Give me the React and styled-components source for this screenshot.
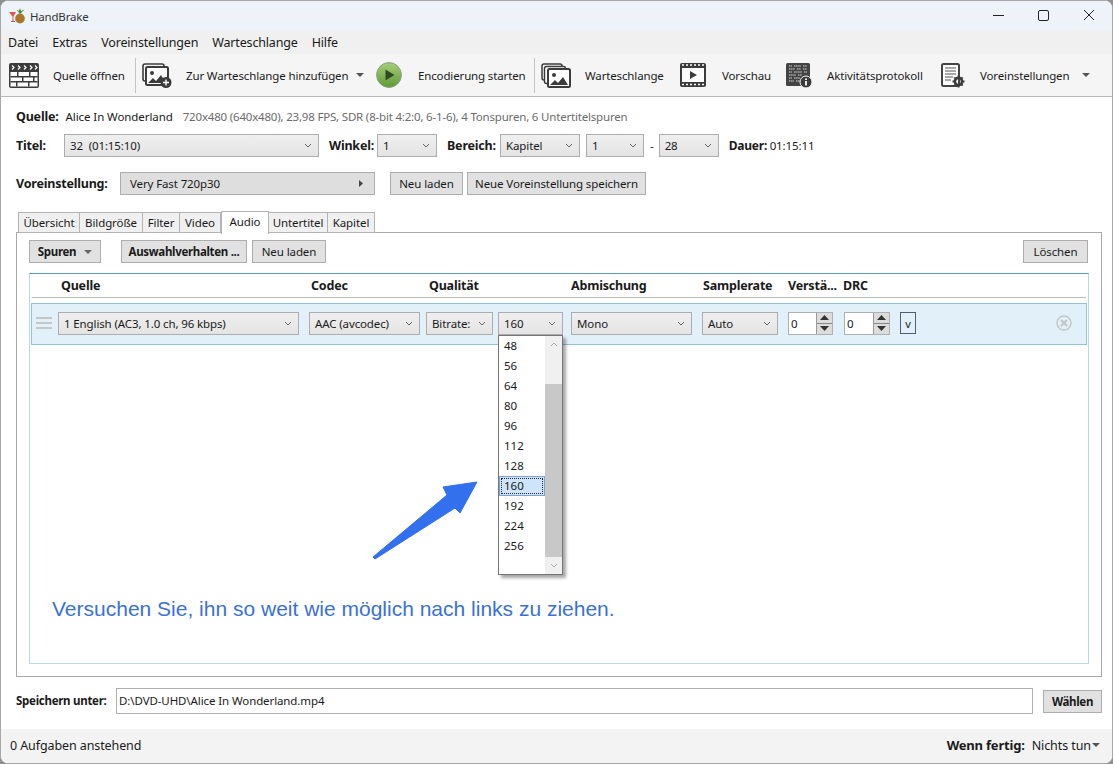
import React from "react";
import styled, { createGlobalStyle } from "styled-components";

const Global = createGlobalStyle`
  html, body {
    margin: 0;
    padding: 0;
    background: #8f8f8f;
  }
  body {
    font-family: "Noto Sans", "Open Sans", sans-serif;
    font-size: 12px;
    color: #1a1a1a;
  }
`;

const Window = styled.div`
  box-sizing: border-box;
  position: relative;
  width: 1113px;
  height: 764px;
  display: flex;
  flex-direction: column;
  overflow: hidden;
  background: #fff;
  border: 1px solid #a8a8a8;
  border-radius: 8px;
`;

const TitleBar = styled.div`
  height: 30px;
  flex: none;
  display: flex;
  align-items: center;
  padding-left: 8px;
  padding-right: 1px;
  background: #eef3fa;
`;

const TitleText = styled.span`
  margin-left: 4px;
  font-size: 11.5px;
  letter-spacing: -0.2px;
  color: #333;
`;

const WindowButtons = styled.div`
  margin-left: auto;
  display: flex;
`;

const WindowButton = styled.div`
  width: 45px;
  height: 28px;
  margin-bottom: 2px;
  display: flex;
  align-items: center;
  justify-content: center;
`;

const MenuBar = styled.div`
  height: 23px;
  flex: none;
  display: flex;
  align-items: center;
  gap: 14px;
  padding-left: 7px;
  background: #f0f0f0;
  font-size: 12.5px;
  letter-spacing: -0.16px;
`;

const Toolbar = styled.div`
  height: 42px;
  flex: none;
  display: flex;
  align-items: center;
  padding-left: 8px;
  background: #f5f5f5;
  border-bottom: 1px solid #b9b9b9;
`;

const ToolButton = styled.div`
  width: ${props => props.$w}px;
  flex: none;
  display: flex;
  align-items: center;
  gap: ${props => props.$gap || 14}px;
  font-size: 11.5px;
  letter-spacing: -0.14px;
  white-space: nowrap;
`;

const ToolSep = styled.div`
  width: 1px;
  height: 35px;
  flex: none;
  margin-right: 6px;
  background: #c4c4c4;
`;

const Caret = styled.span`
  width: 0;
  height: 0;
  flex: none;
  margin-left: ${props => props.$ml || 0}px;
  border-left: 4px solid transparent;
  border-right: 4px solid transparent;
  border-top: 4px solid ${props => props.$color || "#555"};
`;

const Body = styled.div`
  flex: 1;
  display: flex;
  flex-direction: column;
  padding: 0 10px 0 15px;
  min-height: 0;
`;

const SourceRow = styled.div`
  height: 37px;
  flex: none;
  display: flex;
  align-items: center;
  padding-top: 2px;
  box-sizing: border-box;
  white-space: nowrap;
`;

const Label = styled.span`
  font-weight: 700;
  font-size: ${props => props.$size || 12.5}px;
  letter-spacing: -0.2px;
  white-space: nowrap;
  width: ${props => (props.$w ? props.$w + "px" : "auto")};
  margin-left: ${props => props.$ml || 0}px;
  flex: none;
`;

const Value = styled.span`
  font-size: ${props => props.$size || 11.5}px;
  letter-spacing: -0.08px;
  margin-left: ${props => props.$ml || 0}px;
`;

const Muted = styled(Value)`
  color: #6c6c6c;
  letter-spacing: -0.19px;
`;

const ControlRow = styled.div`
  height: 23px;
  flex: none;
  display: flex;
  align-items: center;
  margin-top: ${props => props.$mt || 0}px;
`;

const SelectBox = styled.div`
  box-sizing: border-box;
  width: ${props => props.$w}px;
  height: 23px;
  flex: none;
  margin-left: ${props => props.$ml || 0}px;
  display: flex;
  align-items: center;
  justify-content: space-between;
  padding: 0 6px 0 5px;
  background: linear-gradient(#efefef, #e4e4e4);
  border: 1px solid #adadad;
  font-size: 11.5px;
  letter-spacing: -0.12px;
  white-space: nowrap;
`;

const Button = styled.div`
  box-sizing: border-box;
  width: ${props => props.$w}px;
  height: 23px;
  flex: none;
  margin-left: ${props => props.$ml || 0}px;
  display: flex;
  align-items: center;
  justify-content: center;
  gap: 8px;
  background: #e1e1e1;
  border: 1px solid #adadad;
  font-size: 11.5px;
  letter-spacing: ${props => (props.$bold ? -0.32 : -0.1)}px;
  font-weight: ${props => (props.$bold ? 700 : 400)};
  white-space: nowrap;
`;

const DeleteButton = styled(Button)`
  margin-left: auto;
  margin-right: 1px;
`;

const PresetButton = styled(SelectBox)`
  background: #dedede;
  padding-left: 9px;
  padding-right: 11px;
`;

const Tabs = styled.div`
  height: 26px;
  flex: none;
  display: flex;
  align-items: flex-end;
  margin-top: 12px;
  margin-bottom: -1px;
  padding-left: 2px;
  position: relative;
  z-index: 1;
`;

const Tab = styled.div`
  box-sizing: border-box;
  width: ${props => props.$w}px;
  height: ${props => (props.$active ? 23 : 21)}px;
  margin-bottom: ${props => (props.$active ? -1 : 0)}px;
  padding-bottom: ${props => (props.$active ? 4 : 1)}px;
  display: flex;
  align-items: center;
  justify-content: center;
  background: ${props => (props.$active ? "#fff" : "#f0f0f0")};
  border: 1px solid #b4b4b4;
  border-left-width: ${props => (props.$first || props.$active ? 1 : 0)}px;
  border-bottom: ${props => (props.$active ? "none" : "1px solid #b4b4b4")};
  font-size: 11.5px;
  letter-spacing: -0.1px;
`;

const Panel = styled.div`
  box-sizing: border-box;
  height: 445px;
  flex: none;
  display: flex;
  flex-direction: column;
  padding: 7px 12px 12px 12px;
  border: 1px solid #a9a9a9;
`;

const PanelActions = styled.div`
  height: 23px;
  flex: none;
  display: flex;
  align-items: center;
  margin-bottom: 10px;
`;

const Table = styled.div`
  position: relative;
  flex: 1;
  border: 1px solid #b9d9e6;
  border-top-color: #5d9cbc;
  padding: 0 1px;
`;

const TableHead = styled.div`
  height: 23px;
  display: flex;
  align-items: center;
  margin: 0 1px;
  padding-left: 29px;
  border-bottom: 1px solid #bcbcbc;
`;

const HeadCell = styled.div`
  width: ${props => props.$w}px;
  flex: none;
  font-weight: 700;
  font-size: 12.5px;
  letter-spacing: -0.2px;
  white-space: nowrap;
`;

const TrackRow = styled.div`
  box-sizing: border-box;
  height: 42px;
  margin-top: 5px;
  display: flex;
  align-items: center;
  padding: 0 0 2px 4px;
  background: #e2f1f9;
  border: 1px solid #90c2d9;
`;

const Handle = styled.div`
  width: 16px;
  height: 12px;
  flex: none;
  margin-right: 6px;
  border-top: 2px solid #c6c6c6;
  border-bottom: 2px solid #c6c6c6;
  position: relative;
  box-sizing: border-box;

  &::after {
    content: "";
    position: absolute;
    left: 0;
    right: 0;
    top: 3px;
    height: 2px;
    background: #c6c6c6;
  }
`;

const Spinner = styled.div`
  box-sizing: border-box;
  width: ${props => props.$w}px;
  height: 23px;
  flex: none;
  margin-left: ${props => props.$ml}px;
  display: flex;
  background: #fff;
  border: 1px solid #b0b0b0;
`;

const SpinnerValue = styled.div`
  flex: 1;
  padding-left: 2px;
  display: flex;
  align-items: center;
  font-size: 11.5px;
`;

const SpinnerArrows = styled.div`
  width: 15px;
  display: flex;
  flex-direction: column;
  gap: 1px;
  background: #888;
  border-left: 1px solid #9a9a9a;
`;

const SpinnerArrow = styled.div`
  flex: 1;
  display: flex;
  align-items: center;
  justify-content: center;
  background: #dcdcdc;
`;

const MiniToggle = styled.div`
  box-sizing: border-box;
  width: 16px;
  height: 22px;
  flex: none;
  margin-left: 10px;
  display: flex;
  align-items: center;
  justify-content: center;
  border: 1px solid #4f5f6e;
  font-size: 11px;
`;

const RemoveIcon = styled.div`
  margin-left: auto;
  margin-right: 14px;
  display: flex;
`;

const Dropdown = styled.div`
  position: absolute;
  left: 468px;
  top: 61px;
  box-sizing: border-box;
  width: 65px;
  height: 240px;
  display: flex;
  background: #fff;
  border: 1px solid #767676;
  box-shadow: 3px 3px 3px rgba(0, 0, 0, 0.35);
  z-index: 3;
`;

const DropdownList = styled.div`
  flex: 1;
  display: flex;
  flex-direction: column;
`;

const DropdownItem = styled.div`
  box-sizing: border-box;
  height: 20px;
  flex: none;
  display: flex;
  align-items: center;
  padding: 0 0 2px ${props => (props.$selected ? 4 : 5)}px;
  font-size: 11.5px;
  background: ${props => (props.$selected ? "#cde4fb" : "transparent")};
  border: ${props => (props.$selected ? "1px solid #7da2ce" : "none")};
  outline: ${props => (props.$selected ? "1px dotted #223" : "none")};
  outline-offset: -3px;
`;

const Scrollbar = styled.div`
  width: 17px;
  flex: none;
  display: flex;
  flex-direction: column;
  background: #f0f0f0;
`;

const ScrollEnd = styled.div`
  height: 17px;
  flex: none;
  display: flex;
  align-items: center;
  justify-content: center;
`;

const ScrollTrack = styled.div`
  flex: 1;
  display: flex;
  flex-direction: column;
  padding-top: 31px;
`;

const ScrollThumb = styled.div`
  flex: 1;
  background: #c8c8c8;
`;

const ArrowMark = styled.svg`
  position: absolute;
  left: 340px;
  top: 204px;
  z-index: 2;
`;

const Hint = styled.div`
  position: absolute;
  left: 22px;
  top: 323px;
  font-family: "Liberation Sans", Arial, sans-serif;
  font-size: 21px;
  color: #3a70dc;
  white-space: nowrap;
`;

const SaveRow = styled.div`
  box-sizing: border-box;
  height: 51px;
  flex: none;
  display: flex;
  align-items: center;
  padding-bottom: 3px;
`;

const SaveLabel = styled(Label)`
  font-size: 11.5px;
  letter-spacing: -0.28px;
  width: 100px;
  padding-bottom: 2px;
`;

const PathInput = styled.div`
  box-sizing: border-box;
  width: 917px;
  height: 26px;
  flex: none;
  display: flex;
  align-items: center;
  padding: 0 0 2px 2px;
  background: #fff;
  border: 1px solid #b0b0b0;
  font-size: 11.5px;
  letter-spacing: -0.1px;
`;

const StatusBar = styled.div`
  box-sizing: border-box;
  height: 34px;
  margin-top: auto;
  flex: none;
  display: flex;
  align-items: center;
  padding: 0 12px 2px 9px;
  background: #f3f3f3;
  font-size: 12.5px;
  letter-spacing: -0.1px;
`;

const StatusRight = styled.div`
  margin-left: auto;
  display: flex;
  align-items: center;
`;

const Chevron = () => (
  <svg width="8" height="5" viewBox="0 0 8 5" fill="none" stroke="#666" strokeWidth="1">
    <path d="M1 1l3 3 3-3" />
  </svg>
);

const Select = ({ children, ...rest }) => (
  <SelectBox {...rest}>
    <span>{children}</span>
    <Chevron />
  </SelectBox>
);

const HandBrakeLogo = () => (
  <svg width="17" height="17" viewBox="0 0 17 17">
    <path d="M0 4h7L4.5 8.5V13H6v1H2v-1h1.5V8.5z" fill="#d8584e" />
    <ellipse cx="11" cy="10.5" rx="4.8" ry="5" fill="#a8772a" />
    <path d="M11 6L7.500 1.500l2.500 1.500L11 0l1 3 3.500-1.500z" fill="#4d8b31" />
  </svg>
);

const OpenIcon = () => (
  <svg width="30" height="25" viewBox="0 0 30 25">
    <rect x="0" y="0" width="30" height="25" rx="2" fill="#3c3c3c" />
    <path d="M3 2.5l2 2-2 2M9 2.5l2 2-2 2M15 2.5l2 2-2 2M21 2.5l2 2-2 2M26 2.5l2 2-2 2" fill="none" stroke="#fff" strokeWidth="1.2" />
    <rect x="1.5" y="9" width="27" height="14.5" fill="#fff" />
    <path d="M1.5 13h27v1.5h-27zM1.5 18h27v1.5h-27zM8 9h1.5v4H8zM20 9h1.5v4H20zM13 14.5h1.5V18H13zM24 14.5h1.5V18H24zM7 19.5h1.5v4H7zM19 19.5h1.5v4H19z" fill="#3c3c3c" />
  </svg>
);

const Photo = ({ x = 5, y = 5 }) => (
  <g transform={`translate(${x} ${y})`}>
    <rect width="22" height="18" rx="1.5" fill="#fff" stroke="#3c3c3c" strokeWidth="2" />
    <circle cx="6" cy="6" r="2" fill="#3c3c3c" />
    <path d="M2 16l5-5 3 3 5-6 5 8z" fill="#3c3c3c" />
  </g>
);

const AddQueueIcon = () => (
  <svg width="30" height="25" viewBox="0 0 30 25">
    <rect x="1" y="1" width="21" height="17" rx="2" fill="none" stroke="#3c3c3c" strokeWidth="1.6" />
    <Photo x={4} y={4} />
    <circle cx="24" cy="19.5" r="5.5" fill="#3c3c3c" />
    <path d="M24 16.5v6M21 19.5h6" stroke="#fff" strokeWidth="1.4" />
  </svg>
);

const StartIcon = () => (
  <svg width="26" height="26" viewBox="0 0 26 26">
    <defs>
      <linearGradient id="go" x1="0" y1="0" x2="0" y2="1">
        <stop offset="0" stopColor="#a6cf7c" />
        <stop offset="1" stopColor="#5f9a35" />
      </linearGradient>
    </defs>
    <circle cx="13" cy="13" r="12.4" fill="url(#go)" stroke="#8a9a80" strokeWidth="1" />
    <path d="M9.5 7.5v11l9-5.5z" fill="#2f4a22" />
  </svg>
);

const QueueIcon = () => (
  <svg width="30" height="25" viewBox="0 0 30 25">
    <rect x="1" y="1" width="20" height="16" rx="2" fill="none" stroke="#3c3c3c" strokeWidth="1.5" />
    <rect x="3.5" y="3.5" width="21" height="17" rx="2" fill="#fff" stroke="#3c3c3c" strokeWidth="1.5" />
    <Photo x={7} y={6} />
  </svg>
);

const PreviewIcon = () => (
  <svg width="26" height="24" viewBox="0 0 26 24">
    <rect x="0" y="0" width="26" height="24" rx="2" fill="#3c3c3c" />
    <rect x="2" y="5" width="22" height="14" fill="#fff" />
    <path d="M2 2h2M6 2h2M10 2h2M14 2h2M18 2h2M22 2h2M2 21.5h2M6 21.5h2M10 21.5h2M14 21.5h2M18 21.5h2M22 21.5h2" stroke="#fff" strokeWidth="1.5" />
    <path d="M10 8v8l7-4z" fill="#3c3c3c" />
  </svg>
);

const LogIcon = () => (
  <svg width="26" height="25" viewBox="0 0 26 25">
    <rect x="0" y="0" width="24" height="23" rx="1.5" fill="#444" />
    <path d="M3 3h3M8 3h7M17 3h4M3 6h6M11 6h4M17 6h4M3 9h3M8 9h8M18 9h3M3 12h7M12 12h4M3 15h3M8 15h6M3 18h5M10 18h4" stroke="#ddd" strokeWidth="1.2" strokeDasharray="1.5 0.6" />
    <circle cx="20" cy="19" r="6" fill="#3c3c3c" stroke="#f5f5f5" strokeWidth="1" />
    <path d="M20 15.5v1.6M20 18v4.5" stroke="#fff" strokeWidth="1.8" />
  </svg>
);

const SettingsIcon = () => (
  <svg width="24" height="25" viewBox="0 0 24 25">
    <rect x="1" y="1" width="17" height="22" rx="1.5" fill="#fff" stroke="#444" strokeWidth="2" />
    <path d="M4 5h11M4 8h11M4 11h11M4 14h8M4 17h6" stroke="#555" strokeWidth="1.2" />
    <circle cx="17.5" cy="18.5" r="3.6" fill="none" stroke="#3c3c3c" strokeWidth="2.6" />
    <path d="M17.5 12.5v2M17.5 22.5v2M11.5 18.5h2M21.5 18.5h2M13.3 14.3l1.4 1.4M20.3 21.3l1.4 1.4M13.3 22.7l1.4-1.4M20.3 15.7l1.4-1.4" stroke="#3c3c3c" strokeWidth="1.8" />
  </svg>
);

const UpTriangle = ({ down }) => (
  <svg width="9" height="5" viewBox="0 0 9 5">
    <path d={down ? "M0 0h9L4.5 5z" : "M0 5h9L4.5 0z"} fill="#333" />
  </svg>
);

const NumberSpinner = ({ w, ml }) => (
  <Spinner $w={w} $ml={ml}>
    <SpinnerValue>0</SpinnerValue>
    <SpinnerArrows>
      <SpinnerArrow>
        <UpTriangle />
      </SpinnerArrow>
      <SpinnerArrow>
        <UpTriangle down />
      </SpinnerArrow>
    </SpinnerArrows>
  </Spinner>
);

const bitrates = ["48", "56", "64", "80", "96", "112", "128", "160", "192", "224", "256"];

const tabs = [
  ["Übersicht", 62],
  ["Bildgröße", 63],
  ["Filter", 37],
  ["Video", 41],
  ["Audio", 48],
  ["Untertitel", 59],
  ["Kapitel", 47]
];

function App() {
  return (
    <Window>
      <Global />
      <TitleBar>
        <HandBrakeLogo />
        <TitleText>HandBrake</TitleText>
        <WindowButtons>
          <WindowButton>
            <svg width="11" height="11" viewBox="0 0 11 11" stroke="#222" fill="none">
              <path d="M0 5.5h11" />
            </svg>
          </WindowButton>
          <WindowButton>
            <svg width="11" height="11" viewBox="0 0 11 11" stroke="#222" fill="none">
              <rect x="0.5" y="0.5" width="10" height="10" rx="1.5" />
            </svg>
          </WindowButton>
          <WindowButton>
            <svg width="12" height="12" viewBox="0 0 12 12" stroke="#222" fill="none">
              <path d="M1 1l10 10M11 1L1 11" />
            </svg>
          </WindowButton>
        </WindowButtons>
      </TitleBar>

      <MenuBar>
        <span>Datei</span>
        <span>Extras</span>
        <span>Voreinstellungen</span>
        <span>Warteschlange</span>
        <span>Hilfe</span>
      </MenuBar>

      <Toolbar>
        <ToolButton $w={126}>
          <OpenIcon />
          Quelle öffnen
        </ToolButton>
        <ToolSep />
        <ToolButton $w={234}>
          <AddQueueIcon />
          Zur Warteschlange hinzufügen
          <Caret $ml={-6} />
        </ToolButton>
        <ToolButton $w={158} $gap={16}>
          <StartIcon />
          Encodierung starten
        </ToolButton>
        <ToolSep />
        <ToolButton $w={139}>
          <QueueIcon />
          Warteschlange
        </ToolButton>
        <ToolButton $w={106} $gap={16}>
          <PreviewIcon />
          Vorschau
        </ToolButton>
        <ToolButton $w={155} $gap={15}>
          <LogIcon />
          Aktivitätsprotokoll
        </ToolButton>
        <ToolButton $w={150} $gap={15}>
          <SettingsIcon />
          Voreinstellungen
          <Caret $ml={-2} />
        </ToolButton>
      </Toolbar>

      <Body>
        <SourceRow>
          <Label>Quelle:</Label>
          <Value $ml={7}>Alice In Wonderland</Value>
          <Muted $ml={10}>720x480 (640x480), 23,98 FPS, SDR (8-bit 4:2:0, 6-1-6), 4 Tonspuren, 6 Untertitelspuren</Muted>
        </SourceRow>

        <ControlRow>
          <Label $w={48}>Titel:</Label>
          <Select $w={255}>32&nbsp; (01:15:10)</Select>
          <Label $ml={10} $w={48}>Winkel:</Label>
          <Select $w={60}>1</Select>
          <Label $ml={10} $w={53}>Bereich:</Label>
          <Select $w={80}>Kapitel</Select>
          <Select $w={58} $ml={6}>1</Select>
          <Value $ml={6}>-</Value>
          <Select $w={60} $ml={5}>28</Select>
          <Label $ml={10} $w={41} $size={12}>Dauer:</Label>
          <Value>01:15:11</Value>
        </ControlRow>

        <ControlRow $mt={15}>
          <Label $w={104}>Voreinstellung:</Label>
          <PresetButton $w={255}>
            <span>Very Fast 720p30</span>
            <svg width="4" height="7" viewBox="0 0 4 7">
              <path d="M0 0l4 3.5L0 7z" fill="#444" />
            </svg>
          </PresetButton>
          <Button $w={73} $ml={15}>Neu laden</Button>
          <Button $w={179} $ml={4}>Neue Voreinstellung speichern</Button>
        </ControlRow>

        <Tabs>
          {tabs.map(([name, width], index) => (
            <Tab key={name} $w={width} $first={index === 0} $active={name === "Audio"}>
              {name}
            </Tab>
          ))}
        </Tabs>

        <Panel>
          <PanelActions>
            <Button $w={72} $bold>
              Spuren
              <Caret $color="#666" />
            </Button>
            <Button $w={126} $ml={20} $bold>Auswahlverhalten ...</Button>
            <Button $w={74} $ml={5}>Neu laden</Button>
            <DeleteButton $w={65}>Löschen</DeleteButton>
          </PanelActions>

          <Table>
            <TableHead>
              <HeadCell $w={250}>Quelle</HeadCell>
              <HeadCell $w={118}>Codec</HeadCell>
              <HeadCell $w={142}>Qualität</HeadCell>
              <HeadCell $w={132}>Abmischung</HeadCell>
              <HeadCell $w={85}>Samplerate</HeadCell>
              <HeadCell $w={55}>Verstä...</HeadCell>
              <HeadCell $w={40}>DRC</HeadCell>
            </TableHead>

            <TrackRow>
              <Handle />
              <Select $w={241}>1 English (AC3, 1.0 ch, 96 kbps)</Select>
              <Select $w={111} $ml={10}>AAC (avcodec)</Select>
              <Select $w={67} $ml={6}>Bitrate:</Select>
              <Select $w={65} $ml={5}>160</Select>
              <Select $w={121} $ml={8}>Mono</Select>
              <Select $w={76} $ml={10}>Auto</Select>
              <NumberSpinner w={45} ml={10} />
              <NumberSpinner w={46} ml={11} />
              <MiniToggle>v</MiniToggle>
              <RemoveIcon>
                <svg width="16" height="16" viewBox="0 0 16 16" fill="none" stroke="#c4c4c4">
                  <circle cx="8" cy="8" r="7" strokeWidth="1.4" />
                  <path d="M5 5l6 6M11 5l-6 6" strokeWidth="2" />
                </svg>
              </RemoveIcon>
            </TrackRow>

            <Dropdown>
              <DropdownList>
                {bitrates.map(rate => (
                  <DropdownItem key={rate} $selected={rate === "160"}>
                    {rate}
                  </DropdownItem>
                ))}
              </DropdownList>
              <Scrollbar>
                <ScrollEnd>
                  <svg width="8" height="5" viewBox="0 0 8 5" fill="none" stroke="#aaa">
                    <path d="M1 4l3-3 3 3" />
                  </svg>
                </ScrollEnd>
                <ScrollTrack>
                  <ScrollThumb />
                </ScrollTrack>
                <ScrollEnd>
                  <svg width="8" height="5" viewBox="0 0 8 5" fill="none" stroke="#aaa">
                    <path d="M1 1l3 3 3-3" />
                  </svg>
                </ScrollEnd>
              </Scrollbar>
            </Dropdown>

            <ArrowMark width="112" height="84" viewBox="0 0 112 84">
              <path
                d="M3 79L77 17 73 9 107 4 90 35 85 30 5 81z"
                fill="#3370ee"
                stroke="#3370ee"
                strokeWidth="1"
                strokeLinejoin="round"
              />
            </ArrowMark>

            <Hint>Versuchen Sie, ihn so weit wie möglich nach links zu ziehen.</Hint>
          </Table>
        </Panel>

        <SaveRow>
          <SaveLabel>Speichern unter:</SaveLabel>
          <PathInput>D:\DVD-UHD\Alice In Wonderland.mp4</PathInput>
          <Button $w={59} $ml={10} $bold>Wählen</Button>
        </SaveRow>
      </Body>

      <StatusBar>
        0 Aufgaben anstehend
        <StatusRight>
          <Label $size={13}>Wenn fertig:</Label>
          <Value $ml={7} $size={12.5}>Nichts tun</Value>
          <Caret $ml={1} />
        </StatusRight>
      </StatusBar>
    </Window>
  );
}

export default App;
